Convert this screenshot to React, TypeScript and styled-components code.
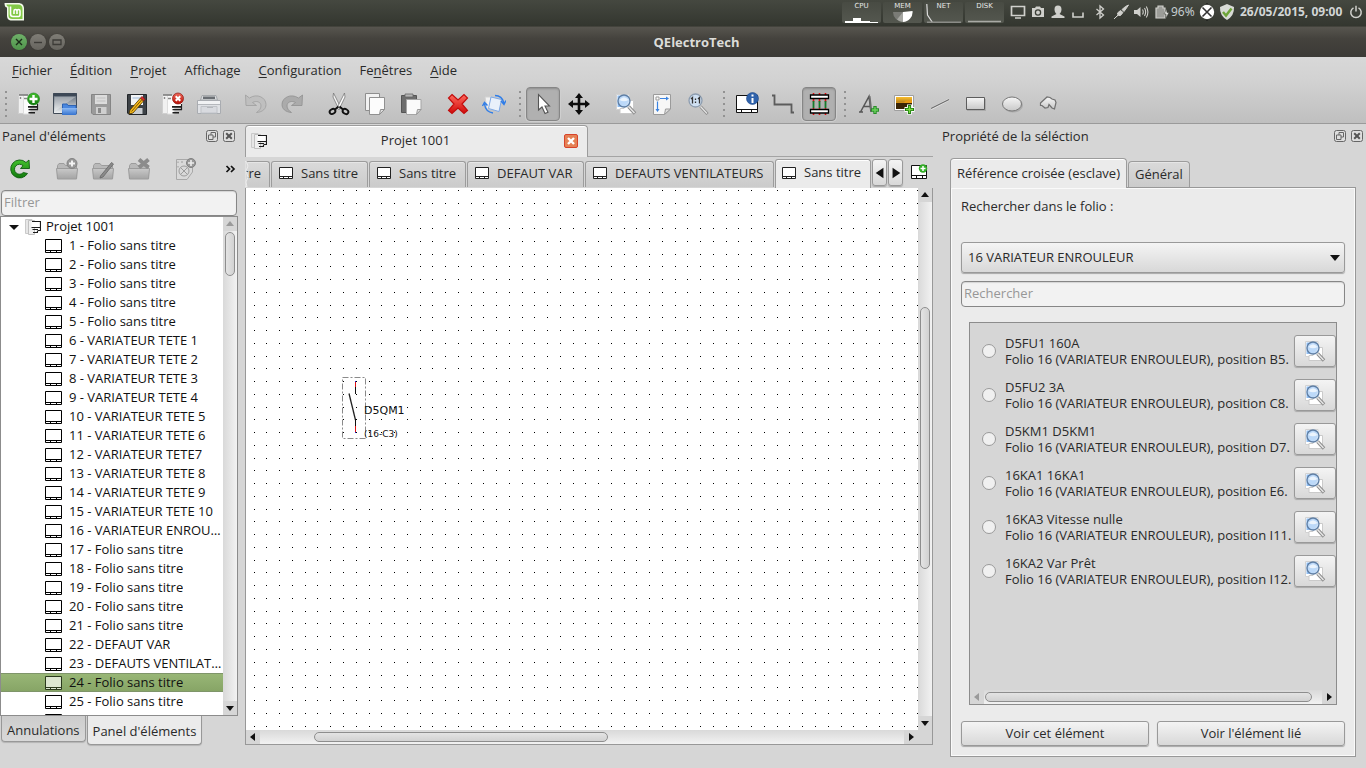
import React from "react";
import styled, { createGlobalStyle, css } from "styled-components";

const FONT = '"Open Sans", "Noto Sans", sans-serif';
const BG = "#d6d6d6";
const LIGHT = "#ebebeb";
const LINE = "#8c8c8c";

const GlobalStyle = createGlobalStyle`
  * { box-sizing: border-box; }
  html, body { margin: 0; padding: 0; }
  body {
    background: ${BG};
    color: #2a2a2a;
    font-family: ${FONT};
    font-size: 13px;
    line-height: 16px;
  }
  button, input, select { font: inherit; color: inherit; }
  button { margin: 0; padding: 0; border: 0; background: none; }
  svg { display: block; flex: none; }
  ul { margin: 0; padding: 0; list-style: none; }
`;

const Desktop = styled.div`
  display: flex;
  flex-direction: column;
  height: 100vh;
  overflow: hidden;
`;

/* ---------- desktop panel ---------- */

const DesktopPanel = styled.header`
  display: flex;
  align-items: center;
  height: 26px;
  flex: none;
  padding: 0 0 2px 4px;
  color: #d0d0cc;
  font-family: "Noto Sans", sans-serif;
  font-size: 12px;
  background: linear-gradient(#454840, #33362f);
`;
const Spacer = styled.div`flex: 1;`;
const Monitors = styled.div`
  display: flex;
  gap: 2px;
  margin-right: 4px;
`;
const Monitor = styled.div`
  display: flex;
  flex-direction: column;
  align-items: center;
  justify-content: space-between;
  width: 39px;
  height: 21px;
  border-radius: 2px;
  background: linear-gradient(#484b43, #54574f);
  color: #e6e6e6;
  font: 7px/8px "DejaVu Sans", sans-serif;
`;
const Tray = styled.div`
  display: flex;
  align-items: center;
`;
const TrayGroup = styled.div`
  display: flex;
  margin-right: 3px;
`;
const TrayButton = styled.button`
  display: flex;
  align-items: center;
  justify-content: center;
  width: 20px;
  height: 22px;
`;
const Battery = styled.span`
  width: 26px;
  color: #c4cccf;
  white-space: nowrap;
`;
const Clock = styled.time`
  width: 106px;
  margin-left: 3px;
  font-weight: 700;
  color: #d2d6d6;
  white-space: nowrap;
`;

/* ---------- window frame ---------- */

const TitleBar = styled.div`
  display: grid;
  grid-template-columns: 1fr auto 1fr;
  align-items: center;
  height: 31px;
  flex: none;
  padding: 0 0 0 11px;
  background: linear-gradient(#57554f, #44423d 40%, #3b3a36);
  border-top: 1px solid #43433c;
  h1 { margin: 0 0 0 16px; font-size: 13px; line-height: 18px; font-weight: 700; color: #dcdcd8; }
`;
const WindowButtons = styled.div`
  display: flex;
  align-items: center;
  gap: 3px;
`;
const WindowButton = styled.button<{ $green?: boolean }>`
  display: flex;
  align-items: center;
  justify-content: center;
  width: 16px;
  height: 16px;
  border-radius: 50%;
  box-shadow: 0 0 1px #2a2926;
  background: ${(p) => (p.$green ? "linear-gradient(#6fb069, #4f944b)" : "linear-gradient(#7f7d76, #66645e)")};
`;

const Chrome = styled.div`
  flex: none;
  background: linear-gradient(#d8d8d8, #d2d2d2 35%, #bfbfbf);
  border-bottom: 1px solid #9a9a9a;
`;
const MenuBar = styled.nav`
  display: flex;
  align-items: center;
  gap: 18px;
  height: 28px;
  padding: 0 12px 2px;
`;
const MenuItem = styled.button`
  white-space: nowrap;
  u { text-underline-offset: 2px; text-decoration-thickness: 1px; }
`;
const ToolBar = styled.div`
  display: flex;
  align-items: center;
  height: 38px;
`;
const Grip = styled.div<{ $first?: boolean }>`
  width: ${(p) => (p.$first ? 11 : 13)}px;
  height: 26px;
  background: repeating-linear-gradient(#929292 0 2px, transparent 2px 6px) ${(p) => (p.$first ? "5px" : "7px")} 0 / 2px 26px no-repeat;
`;
const Gap = styled.div`width: 11px;`;
const Tool = styled.button<{ $on?: boolean }>`
  display: flex;
  align-items: center;
  justify-content: center;
  width: 34px;
  height: 34px;
  margin: 0 1px;
  border: 1px solid transparent;
  border-radius: 4px;
  flex: none;
  ${(p) =>
    p.$on &&
    css`
      background: #b0b0b0;
      border-color: #868686;
      box-shadow: inset 0 1px 2px #8f8f8f, 0 0 0 1px #cfcfcf;
    `}
`;

/* ---------- body ---------- */

const Body = styled.div`
  display: flex;
  flex: 1;
  min-height: 0;
`;
const Dock = styled.aside<{ $w: number }>`
  display: flex;
  flex-direction: column;
  flex: none;
  width: ${(p) => p.$w}px;
  min-height: 0;
`;
const DockTitle = styled.div`
  display: flex;
  align-items: center;
  gap: 5px;
  height: 24px;
  flex: none;
  padding: 0 3px 0 2px;
  h2 { flex: 1; margin: 0; font-size: 13px; line-height: 16px; font-weight: 400; }
`;
const DockTools = styled.div`
  display: flex;
  align-items: center;
  height: 42px;
  flex: none;
  padding: 0 1px 0 2px;
  span { flex: 1; }
`;

const fieldBox = css`
  height: 26px;
  border: 1px solid #868686;
  border-radius: 4px;
  background: #f2f2f2;
  box-shadow: inset 0 1px 1px #d4d4d4;
  flex: none;
  outline: none;
  &::placeholder { color: #979797; opacity: 1; }
`;
const Filter = styled.input`
  ${fieldBox}
  margin: 0 1px;
  padding: 0 2px 2px;
`;

const TreeBox = styled.div`
  display: flex;
  flex: 1;
  min-height: 0;
  border: 1px solid ${LINE};
  background: #fff;
  color: #111;
`;
const Tree = styled.ul`
  flex: 1;
  min-width: 0;
  overflow: hidden;
`;
const TreeRow = styled.li<{ $root?: boolean; $selected?: boolean }>`
  display: flex;
  align-items: center;
  gap: ${(p) => (p.$root ? 5 : 6)}px;
  height: 19px;
  padding-left: ${(p) => (p.$root ? 7 : 43)}px;
  span { padding-bottom: 2px; overflow: hidden; text-overflow: ellipsis; white-space: nowrap; }
  ${(p) =>
    p.$selected &&
    css`
      background: linear-gradient(#98b676, #87a566);
      border-top: 1px solid #7f956a;
      border-bottom: 1px solid #7f956a;
    `}
`;

const BottomTabs = styled.div`
  display: flex;
  align-items: flex-start;
  gap: 1px;
  height: 52px;
  flex: none;
  padding-left: 1px;
`;
const BottomTab = styled.button<{ $active?: boolean }>`
  height: ${(p) => (p.$active ? 29 : 26)}px;
  padding: ${(p) => (p.$active ? 2 : 3)}px 5px 0;
  border: 1px solid #989898;
  border-top: 0;
  border-radius: 0 0 4px 4px;
  background: ${(p) => (p.$active ? LIGHT : "linear-gradient(#cccccc, #d9d9d9)")};
  box-shadow: 0 1px 1px #b4b4b4;
  white-space: nowrap;
`;

/* ---------- scroll bars ---------- */

const Bar = styled.div<{ $v?: boolean }>`
  display: flex;
  flex-direction: ${(p) => (p.$v ? "column" : "row")};
  flex: none;
  background: ${BG};
  ${(p) => (p.$v ? "width: 14px;" : "height: 14px;")}
`;
const BarArrow = styled.button`
  display: flex;
  align-items: center;
  justify-content: center;
  width: 14px;
  height: 14px;
  flex: none;
`;
const Track = styled.div<{ $v?: boolean }>`
  display: flex;
  flex-direction: ${(p) => (p.$v ? "column" : "row")};
  flex: 1;
  min-height: 0;
  min-width: 0;
  padding: ${(p) => (p.$v ? "0 2px" : "2px 0")};
  background: linear-gradient(${(p) => (p.$v ? "90deg" : "180deg")}, #d9d9d9, #f2f2f2);
`;
const Before = styled.div<{ $n: number }>`flex: ${(p) => p.$n} 0 0;`;
const Thumb = styled.div<{ $n: number; $v?: boolean }>`
  flex: ${(p) => p.$n} 0 0;
  border: 1px solid #8e8e8e;
  border-radius: 5px;
  background: linear-gradient(${(p) => (p.$v ? "90deg" : "180deg")}, #e4e4e4, #d2d2d2);
`;

const ARROWS = {
  up: "M3 9L7 4L11 9Z",
  down: "M3 5L7 10L11 5Z",
  left: "M9 3L4 7L9 11Z",
  right: "M5 3L10 7L5 11Z",
};
const TAB_ARROWS = { left: "M12 2L3 8L12 14Z", right: "M4 2L13 8L4 14Z" };

function Arrow({ dir, dim }: { dir: keyof typeof ARROWS; dim?: boolean }) {
  return (
    <svg width="14" height="14" viewBox="0 0 14 14">
      <path d={ARROWS[dir]} fill={dim ? "#9a9a9a" : "#111"} />
    </svg>
  );
}
function ScrollBar({ v, parts, dimStart }: { v?: boolean; parts: [number, number, number]; dimStart?: boolean }) {
  return (
    <Bar $v={v}>
      <BarArrow aria-label={v ? "Haut" : "Gauche"}><Arrow dir={v ? "up" : "left"} dim={dimStart} /></BarArrow>
      <Track $v={v}>
        <Before $n={parts[0]} />
        <Thumb $n={parts[1]} $v={v} />
        <Before $n={parts[2]} />
      </Track>
      <BarArrow aria-label={v ? "Bas" : "Droite"}><Arrow dir={v ? "down" : "right"} /></BarArrow>
    </Bar>
  );
}

/* ---------- centre ---------- */

const Workspace = styled.main`
  display: flex;
  flex-direction: column;
  flex: 1;
  min-width: 0;
  margin: 0 7px 23px;
`;
const ProjectTabs = styled.div`
  display: flex;
  flex: none;
  height: 33px;
  padding-top: 1px;
  border-bottom: 1px solid #a4a4a4;
`;
const ProjectTab = styled.div`
  display: flex;
  align-items: center;
  width: 343px;
  height: 32px;
  padding: 0 9px 2px 5px;
  background: ${LIGHT};
  border: 1px solid #9c9c9c;
  border-bottom: 0;
  border-radius: 4px 4px 0 0;
  box-shadow: inset 0 1px 0 #fff;
  span { flex: 1; padding-bottom: 2px; text-align: center; }
`;
const FolioBar = styled.div`
  display: flex;
  align-items: flex-end;
  flex: none;
  height: 31px;
  position: relative;
`;
const FolioTabs = styled.div`
  display: flex;
  align-items: flex-end;
  gap: 1px;
  flex: none;
`;
const FolioTab = styled.button<{ $w: number; $active?: boolean; $cut?: boolean }>`
  display: flex;
  align-items: center;
  justify-content: ${(p) => (p.$cut ? "flex-end" : "flex-start")};
  gap: 7px;
  width: ${(p) => p.$w}px;
  height: ${(p) => (p.$active ? 29 : 26)}px;
  margin-bottom: ${(p) => (p.$active ? 0 : 1)}px;
  padding: 0 8px 2px ${(p) => (p.$active ? 5 : 6)}px;
  overflow: hidden;
  white-space: nowrap;
  border: 1px solid #9c9c9c;
  border-bottom: 0;
  border-radius: 3px 3px 0 0;
  box-shadow: inset 0 1px 0 ${(p) => (p.$active ? "#fff" : "#e6e6e6")};
  background: ${(p) => (p.$active ? LIGHT : "linear-gradient(#dadada, #cbcbcb)")};
  span { padding-bottom: 2px; }
`;
const raised = css`
  border: 1px solid #999;
  border-radius: 3px;
  background: linear-gradient(#f4f4f4, #d8d8d8);
  box-shadow: 0 1px 1px #a8a8a8;
`;
const TabArrow = styled.button`
  ${raised}
  display: flex;
  align-items: center;
  justify-content: center;
  width: 15px;
  height: 27px;
  margin: 0 0 2px 1px;
`;
const AddFolio = styled.button`
  margin: 0 0 8px 7px;
`;
const TornEdge = styled.svg`
  position: absolute;
  left: 0;
  top: 4px;
`;
const Editor = styled.section`
  display: flex;
  flex-direction: column;
  flex: 1;
  min-height: 0;
  border: 1px solid #989898;
  border-top: 0;
`;
const EditorRow = styled.div`
  display: flex;
  flex: 1;
  min-height: 0;
`;
const Canvas = styled.div`
  flex: 1;
  min-width: 0;
  overflow: hidden;
  background: #fff;
`;
const BottomScroll = styled.div`
  padding-right: 14px;
  background: ${BG};
`;

/* ---------- properties dock ---------- */

const PropTabs = styled.div`
  display: flex;
  align-items: flex-end;
  gap: 1px;
  height: 30px;
  margin: 10px 8px 0 10px;
  position: relative;
  z-index: 1;
`;
const PropTab = styled.button<{ $active?: boolean }>`
  height: ${(p) => (p.$active ? 30 : 26)}px;
  margin-bottom: ${(p) => (p.$active ? 0 : 1)}px;
  padding: 0 6px 1px;
  border: 1px solid #9c9c9c;
  border-bottom: 0;
  border-radius: 4px 4px 0 0;
  background: ${(p) => (p.$active ? LIGHT : "linear-gradient(#dadada, #cbcbcb)")};
  box-shadow: inset 0 1px 0 ${(p) => (p.$active ? "#fff" : "#e6e6e6")};
  white-space: nowrap;
`;
const PropPanel = styled.section`
  display: flex;
  flex-direction: column;
  flex: 1;
  min-height: 0;
  margin: -1px 10px 11px;
  padding: 10px;
  border: 1px solid #989898;
  background: ${LIGHT};
  box-shadow: inset 0 0 0 1px #fafafa;
`;
const FieldLabel = styled.label`
  height: 44px;
`;
const SelectWrap = styled.div`
  ${raised}
  display: flex;
  align-items: center;
  height: 31px;
  flex: none;
  padding-right: 3px;
  select {
    flex: 1;
    height: 29px;
    padding: 0 6px 2px;
    border: 0;
    background: transparent;
    appearance: none;
    outline: none;
  }
`;
const Search = styled.input`
  ${fieldBox}
  margin-top: 8px;
  padding: 0 2px 2px;
`;
const Results = styled.div`
  display: flex;
  flex-direction: column;
  flex: 1;
  min-height: 0;
  margin: 15px 8px 16px;
  border: 1px solid ${LINE};
  background: ${BG};
`;
const ResultList = styled.ul`
  flex: 1;
  min-height: 0;
  overflow: hidden;
  padding-top: 6px;
`;
const Result = styled.li`
  display: flex;
  align-items: center;
  height: 44px;
  padding-left: 12px;
`;
const Radio = styled.input`
  appearance: none;
  width: 14px;
  height: 14px;
  margin: 0 9px 0 0;
  border: 1px solid #9a9a9a;
  border-radius: 50%;
  background: #f0f0f0;
  flex: none;
`;
const ResultLabel = styled.label`
  flex: 1;
  white-space: nowrap;
`;
const LookButton = styled.button`
  ${raised}
  display: flex;
  align-items: center;
  justify-content: center;
  width: 42px;
  height: 32px;
  flex: none;
`;
const Actions = styled.div`
  display: grid;
  grid-template-columns: 1fr 1fr;
  gap: 8px;
`;
const PushButton = styled.button`
  ${raised}
  height: 25px;
  padding-bottom: 2px;
`;

/* ---------- icons ---------- */

const Svg24 = ({ children }: { children: React.ReactNode }) => (
  <svg width="24" height="24" viewBox="0 0 24 24" fill="none">{children}</svg>
);

function Gradients() {
  const g = (id: string, a: string, b: string) => (
    <linearGradient id={id} x1="0" y1="0" x2="0" y2="1">
      <stop offset="0" stopColor={a} />
      <stop offset="1" stopColor={b} />
    </linearGradient>
  );
  return (
    <svg width="24" height="24" viewBox="0 0 24 24">
      <defs>
        {g("gBlue", "#8db9f3", "#3573cf")}
        {g("gGreen", "#42c12c", "#127a0d")}
        {g("gRed", "#ee6a5c", "#b80f06")}
        {g("gWin", "#5a6572", "#eef1f3")}
        {g("gGrey", "#c9c9c9", "#a4a4a4")}
        {g("gShape", "#f6f6f6", "#c8c8c8")}
        {g("gSun", "#fbbf2d", "#6c3a05")}
        {g("gX", "#ff6a5e", "#d00808")}
      </defs>
    </svg>
  );
}

const GreenPlus = ({ x, y, r = 6 }: { x: number; y: number; r?: number }) => (
  <g>
    <circle cx={x} cy={y} r={r} fill="url(#gGreen)" stroke="#0f7a10" strokeWidth="0.6" />
    <path d={`M${x - r + 2} ${y}H${x + r - 2}M${x} ${y - r + 2}V${y + r - 2}`} stroke="#fff" strokeWidth="2.400" />
  </g>
);
const ProjectBody = () => (
  <g>
    <path d="M1.500 2.500H8V21.500H1.500Z" fill="#f1f1f1" stroke="#cfcfcf" />
    <path d="M6.500 3.500H13V22H6.500Z" fill="#fbfbfb" stroke="#dedede" />
    <path d="M2 3H11" stroke="#777" strokeWidth="1.500" />
    <path d="M3.500 5V7M7 6.500H10" stroke="#888" strokeWidth="1.400" />
    <path d="M10 8H21V14H10Z" fill="#fff" />
    <path d="M11 14H21V15.700H11ZM11.500 17H21V18.300H11.500ZM11.500 20H18V21.500H11.500Z" fill="#1c1c1c" />
    <path d="M20.500 12V18" stroke="#222" strokeWidth="1.200" />
  </g>
);
const Magnifier = () => (
  <g>
    <path d="M14.500 14.500L21 21.500" stroke="#8e8e8e" strokeWidth="3.400" />
    <path d="M14.500 14.500L20.500 21" stroke="#e8e8e8" strokeWidth="1.400" />
    <circle cx="10" cy="9" r="6" fill="#c4defa" fillOpacity=".85" stroke="#5f7ea3" strokeWidth="1.300" />
    <path d="M5.500 8Q10 2.500 14.500 8Q10 10.500 5.500 8Z" fill="#fff" fillOpacity=".7" />
  </g>
);
const FolderGrey = () => (
  <g>
    <path d="M2.500 21V8.500L4 6.500H9L10.500 8.500H21.500V21Z" fill="#b9b9b9" stroke="#9d9d9d" />
    <path d="M1.500 11.500H22.500L21.500 22H2.500Z" fill="url(#gGrey)" stroke="#9c9c9c" />
  </g>
);

const ICONS: Record<string, React.ReactNode> = {
  newProject: <><ProjectBody /><GreenPlus x={16.5} y={7} /></>,
  open: (
    <>
      <path d="M.5 1.500H23.500V21.500H.5Z" fill="url(#gWin)" stroke="#414b57" />
      <path d="M.5 1H23.500V4H.5Z" fill="#3d4856" />
      <path d="M1.500 5H22.500L2 19Z" fill="#fff" fillOpacity=".3" />
      <path d="M9.500 13V12H14L15 13.500H23V22.500H9.500Z" fill="#4a87df" stroke="#2c63b4" />
      <path d="M9 16H24L23 23H9.500Z" fill="url(#gBlue)" />
    </>
  ),
  save: (
    <>
      <path d="M2.500 2.500H21.500V22.500H4L2.500 21Z" fill="#9b9b9b" stroke="#858585" />
      <path d="M6 3H18V12H6Z" fill="#dcdcdc" />
      <path d="M7.500 6H16.500M7.500 9H16.500" stroke="#c0c0c0" />
      <path d="M7 15H17.500V22H7Z" fill="#cfcfcf" />
      <path d="M9 16H12V21H9Z" fill="#8a8a8a" />
    </>
  ),
  saveAs: (
    <>
      <path d="M2.500 2.500H21.500V22.500H4L2.500 21Z" fill="#3d4247" stroke="#22262a" />
      <path d="M6 3H18V13H6Z" fill="#f2f4f6" />
      <path d="M7.500 6H16.500" stroke="#9cb7d8" />
      <path d="M7 16H17.500V22H7Z" fill="#c9cdd1" />
      <path d="M5 18L15.500 6L18.500 9L8 21L4 22Z" fill="#f5b91c" stroke="#4a3505" strokeWidth=".8" />
      <path d="M15.500 6L17 4.300L20 7.300L18.500 9Z" fill="#d92a2a" stroke="#701010" strokeWidth=".5" />
      <path d="M6.500 19.500L17 7.500" stroke="#6d4b05" strokeWidth=".9" />
    </>
  ),
  closeProject: (
    <>
      <ProjectBody />
      <circle cx="17" cy="6.500" r="5.500" fill="url(#gRed)" stroke="#8f130d" strokeWidth=".7" />
      <path d="M14.700 4.200L19.300 8.800M19.300 4.200L14.700 8.800" stroke="#fff" strokeWidth="2" />
    </>
  ),
  print: (
    <>
      <path d="M5 3.500H19L20.500 8H3.500Z" fill="#d9dbde" stroke="#a5a8ab" />
      <path d="M6 4.500H18V7H6Z" fill="#6a6e73" />
      <path d="M.5 8.500H23.500V21.500H.5Z" fill="#dfe1e5" stroke="#a9acb1" />
      <path d="M1 9H23V12H1Z" fill="#f1f2f4" />
      <path d="M4 14.500H20V21H4Z" fill="#d8dadf" stroke="#c0c3c8" />
      <path d="M10 15.500H16M1 12.500H23" stroke="#b4b7bc" />
    </>
  ),
  undo: <path d="M1.500 3L2 13.500H12.500L8.500 10.500C12 8.500 17 9.500 17 14C17 16.500 15 19 12.500 20.500C19 20 22 16.500 22 12.500C22 5.500 13 1 5.500 6Z" fill="#bfbfbf" stroke="#9e9e9e" strokeWidth=".8" />,
  redo: <path d="M22.500 3L22 13.500H11.500L15.500 10.500C12 8.500 7 9.500 7 14C7 16.500 9 19 11.500 20.500C5 20 2 16.500 2 12.500C2 5.500 11 1 18.500 6Z" fill="#ababab" stroke="#8f8f8f" strokeWidth=".8" />,
  cut: (
    <>
      <path d="M6.500 1L14 16L12 17.500L6 5Z" fill="#f4f4f4" stroke="#777" strokeWidth=".8" />
      <path d="M17.500 1L10 16L12 17.500L18 5Z" fill="#fff" stroke="#777" strokeWidth=".8" />
      <ellipse cx="5.500" cy="19.500" rx="3" ry="2.300" stroke="#111" strokeWidth="1.900" transform="rotate(-30 5.500 19.500)" />
      <ellipse cx="18.500" cy="19.500" rx="3" ry="2.300" stroke="#111" strokeWidth="1.900" transform="rotate(30 18.500 19.500)" />
      <path d="M8 17.500L11.500 14.500M16 17.500L12.500 14.500" stroke="#111" strokeWidth="1.900" />
    </>
  ),
  copy: (
    <>
      <path d="M2.500 1.500H16.500V18.500H2.500Z" fill="#f2f2f2" stroke="#8e8e8e" />
      <path d="M6.500 5.500H21.500V17.500L16.500 22.500H6.500Z" fill="#fcfcfc" stroke="#909090" />
      <path d="M21.500 17.500H17.500L16.500 22.500Z" fill="#ddd" stroke="#909090" />
    </>
  ),
  paste: (
    <>
      <path d="M2.500 3.500H17.500V20.500H2.500Z" fill="#6d6d6d" stroke="#555" />
      <path d="M6 2H14V5H6Z" fill="#b5b5b5" stroke="#666" strokeWidth=".8" />
      <path d="M7.500 7.500H22V17.500L17.500 22.500H7.500Z" fill="#fafafa" stroke="#a5a5a5" />
      <path d="M22 17.500H18.500L17.500 22.500Z" fill="#ddd" stroke="#999" />
    </>
  ),
  remove: <path d="M6 2.500L12 8L18 2.500L21.500 6L16 12L21.500 18.500L18 21.500L12 16L6 21.500L2.500 18.500L8 12L2.500 6Z" fill="url(#gX)" stroke="#c20d0d" strokeWidth="1.200" />,
  rotate: (
    <>
      <path d="M3 5H9V17H5Z" fill="#f2f2f2" stroke="#d2d2d2" />
      <path d="M9 5L19.500 7.500L17 19.500L6.500 16.500Z" fill="#e9f0fa" stroke="#7ea8e4" />
      <path d="M13 3.500Q20 3.500 22 11M19 9L22 12.500L24 8.500M11 21Q3.500 20 2.500 12M.5 14L2.500 10.500L5.500 13.500" stroke="#2f7de8" strokeWidth="1.400" />
    </>
  ),
  pointer: <path d="M7.500 2.500V18L11 15L14 21.500L17 20.300L14 14H18.500Z" fill="#fff" stroke="#555" strokeWidth="1.100" />,
  move: <path d="M12 1L16 6H13.300V10.700H18V8L23 12L18 16V13.300H13.300V18H16L12 23L8 18H10.700V13.300H6V16L1 12L6 8V10.700H10.700V6H8Z" fill="#0c0c0c" />,
  zoomFit: (
    <>
      <path d="M2.500 2.500H15V17.500H2.500Z" fill="#fff" stroke="#d2d2d2" />
      <path d="M3.500 3.500H14V15H3.500Z" fill="#8ebcf0" />
      <path d="M15 8.500H19.500V21.500H6V16.500H10Z" fill="#fff" stroke="#cacaca" />
      <Magnifier />
    </>
  ),
  zoomPage: (
    <>
      <path d="M3.500 2.500H20.500V17L14.500 22.500H3.500Z" fill="#f7f7f7" stroke="#9b9b9b" />
      <path d="M20.500 17H15.500L14.500 22.500Z" fill="#ddd" stroke="#9b9b9b" />
      <path d="M6 5H9V8H6Z" fill="#fff" stroke="#999" />
      <path d="M10 6.500H17M7.500 9.500V19" stroke="#3b83e0" strokeWidth="1.200" />
      <path d="M16 4.500L19 6.500L16 8.500ZM5.500 17L7.500 20L9.500 17Z" fill="#3b83e0" />
    </>
  ),
  zoomReset: (
    <>
      <path d="M14.500 14.500L21.500 22" stroke="#8a8a8a" strokeWidth="3" />
      <path d="M14.500 14.500L21 21.500" stroke="#e4e4e4" strokeWidth="1.300" />
      <circle cx="9.500" cy="8.500" r="6.500" fill="#cfe0f2" stroke="#8d9db0" strokeWidth="1.300" />
      <path d="M5 7L6.500 5.500V11.500M12 7L13.500 5.500V11.500" stroke="#333" strokeWidth="1.300" />
      <path d="M9.500 6.500V8M9.500 9.500V11" stroke="#333" strokeWidth="1.300" />
    </>
  ),
  folioInfo: (
    <>
      <path d="M1.500 3.500H22.500V20.500H1.500Z" fill="#fff" stroke="#111" />
      <path d="M1 17.500H23M6.500 17V21M16.500 17V21" stroke="#111" />
      <circle cx="17.500" cy="6.500" r="6" fill="#2f62ab" stroke="#1f4a8c" strokeWidth=".6" />
      <path d="M17.500 6V11M17.500 2.500V4.500" stroke="#fff" strokeWidth="2" />
    </>
  ),
  conductor: <path d="M1 3.500H3.500V12.500H20.500V20.500H23" stroke="#5c5c5c" strokeWidth="1.800" />,
  autoConductor: (
    <>
      <path d="M6.500 1V23M12.500 1V23M18.500 1V23" stroke="#e01212" strokeWidth="1.600" strokeDasharray="9 6 9" />
      <path d="M6.500 9V16M12.500 9V16M18.500 9V16" stroke="#157a2c" strokeWidth="1.800" />
      <path d="M3.500 3H21.500V6.500H3.500ZM3.500 17.500H21.500V21H3.500Z" fill="#fff" stroke="#000" strokeWidth="1.300" />
    </>
  ),
  text: (
    <>
      <path d="M3 20H7M4.500 20L13 4.500L15 20M8 14.500H14" stroke="#565656" strokeWidth="1.500" />
      <path d="M13 4.500L14.500 4L16 17L14 18Z" fill="#6d6d6d" />
      <path d="M19 14V22M15 18H23" stroke="#2a8d2a" strokeWidth="3.400" />
      <path d="M19 15V21M16 18H22" stroke="#6bd35c" strokeWidth="1.400" />
    </>
  ),
  image: (
    <>
      <path d="M2.500 3.500H21.500V18.500H2.500Z" fill="#fff" stroke="#9f9f9f" />
      <path d="M4 5H20V17H4Z" fill="url(#gSun)" />
      <path d="M4 11H20V17H4Z" fill="#3a2506" />
      <path d="M4 10.500H12L14 8.500H20V11H4Z" fill="#e79a14" />
      <path d="M17.500 12.500V22.500M12.500 17.500H22.500" stroke="#fff" strokeWidth="5" />
      <path d="M17.500 13V22M13 17.500H22" stroke="#217c12" strokeWidth="3.200" />
      <path d="M17.500 14V21M14 17.500H21" stroke="#77dc3f" strokeWidth="1.300" />
    </>
  ),
  line: (
    <>
      <path d="M3 17L21 7.500" stroke="#e4e4e4" strokeWidth="2.400" />
      <path d="M3 16.500L21 7.500" stroke="#6a6a6a" strokeWidth="1.200" />
    </>
  ),
  rect: (
    <>
      <path d="M3 7H22V19H3Z" fill="#999" fillOpacity=".6" />
      <path d="M2.500 5.500H20.500V17.500H2.500Z" fill="url(#gShape)" stroke="#5d5d5d" />
    </>
  ),
  ellipse: (
    <>
      <ellipse cx="13" cy="13" rx="10" ry="7.500" fill="#999" fillOpacity=".6" />
      <ellipse cx="12" cy="12" rx="9.500" ry="7" fill="url(#gShape)" stroke="#777" />
    </>
  ),
  polygon: <path d="M4.500 11L11 5L14 5.500L16 7L19 8L20 10.500L18.500 17L16 16L13 12.500L12 15.500L9 16L6 13.500H4.500Z" fill="url(#gShape)" stroke="#707070" strokeWidth="1.200" />,
  refresh: <path d="M19.500 16.500A9 9 0 1 1 18 5.500L21 3L21.500 11.500H12.500L15 8.700A5 5 0 1 0 15.300 15.500Z" fill="url(#gGreen)" stroke="#0d5d0d" strokeWidth=".9" />,
  folderNew: (
    <>
      <FolderGrey />
      <circle cx="17" cy="6.500" r="5" fill="#999" stroke="#838383" />
      <path d="M17 3.500V9.500M14 6.500H20" stroke="#f4f4f4" strokeWidth="1.900" />
    </>
  ),
  folderEdit: (
    <>
      <FolderGrey />
      <path d="M9.500 19L20.500 5.500L22.500 7L12 20L9 21Z" fill="#8a8a8a" stroke="#666" strokeWidth=".8" />
    </>
  ),
  folderDelete: (
    <>
      <FolderGrey />
      <path d="M12 2.500L21.500 10.500M21.500 2.500L12 10.500" stroke="#8b8b8b" strokeWidth="4" />
    </>
  ),
  elementNew: (
    <>
      <path d="M2.500 2.500H18.500V15L13 22.500H2.500Z" fill="#d9d9d9" stroke="#a8a8a8" />
      <circle cx="10" cy="14" r="5" stroke="#9c9c9c" />
      <path d="M6.500 10.500L13.500 17.500M13.500 10.500L6.500 17.500M4 4.500V6M4 9V10.500M7 5H9" stroke="#9c9c9c" />
      <circle cx="17" cy="6" r="4.500" fill="#999" stroke="#808080" />
      <path d="M17 3V9M14 6H20" stroke="#ececec" strokeWidth="1.600" />
    </>
  ),
};
const Icon = ({ name }: { name: string }) => <Svg24>{ICONS[name]}</Svg24>;

const FolioIcon = ({ faded, small }: { faded?: boolean; small?: boolean }) => (
  <svg width={small ? 16 : 19} height={small ? 15 : 16} viewBox={small ? "0 0 16 15" : "0 0 19 16"} fill="none">
    {small ? (
      <>
        <path d="M1.500 1.500H14.500V12.500H1.500Z" fill="#fff" stroke="#222" />
        <path d="M1 10.500H15M5.500 10V13M10.500 10V13" stroke="#222" />
      </>
    ) : (
      <>
        <path d="M1.500 1.500H17.500V14.500H1.500Z" fill={faded ? "#dde7d1" : "#fff"} stroke={faded ? "#2b3a1d" : "#000"} />
        <path d="M1 12.500H18M6.500 12V15M12.500 12V15" stroke={faded ? "#2b3a1d" : "#000"} />
      </>
    )}
  </svg>
);
const ProjectIcon = () => (
  <svg width="16" height="16" viewBox="0 0 16 16" fill="none">
    <path d="M.5.500H7V14.500H.5Z" fill="#e6e6e6" stroke="#cacaca" />
    <path d="M3.500 1.500H9.500V15.500H3.500Z" fill="#efefef" stroke="#c0c0c0" />
    <path d="M6.500 2.500H15.500V9H6.500Z" fill="#fff" />
    <path d="M7 2.500H15.500V11.500H13M6.500 8.500H15.500M7.500 10.500H13M8 13.500H13M12.500 11.500V13" stroke="#1c1c1c" strokeWidth="1.200" />
  </svg>
);
const DockButton = ({ close, label }: { close?: boolean; label: string }) => (
  <button aria-label={label}>
    <svg width="12" height="12" viewBox="0 0 12 12" fill="none">
      <rect x=".5" y=".5" width="11" height="11" rx="2" fill="#dedede" stroke="#666" />
      {close ? (
        <path d="M3.200 3.200L8.800 8.800M8.800 3.200L3.200 8.800" stroke="#555" strokeWidth="2" />
      ) : (
        <path d="M5 5V2.500H9.500V7H7M2.500 5H7V9.500H2.500Z" stroke="#666" />
      )}
    </svg>
  </button>
);

const MintLogo = () => (
  <svg width="21" height="20" viewBox="0 0 21 20" fill="none">
    <path d="M.5 1H14C18 1 20 3 20 7V18.500H8C4.500 18.500 3 16.500 3 13.500V5.500C1.500 5.500.5 4 .5 1Z" fill="#f4faec" />
    <path d="M2.500 2.500H14C17 2.500 18.500 4 18.500 7V17H8.500C5.500 17 4.500 15.500 4.500 13.500V4.500C3.500 4.500 2.500 4 2.500 2.500Z" fill="#83c947" />
    <path d="M6.500 4.500V12Q6.500 14.500 9 14.500H14.500Q16 14.500 16 12.500V9Q16 7.500 14.500 7.500T13 9V12M13 9Q13 7.500 11.500 7.500T10 9V12" stroke="#fff" strokeWidth="1.600" />
  </svg>
);

const TRAY: [string, React.ReactNode][] = [
  ["Écran", <path key="a" d="M1.500 2.500H14.500V11.500H1.500ZM5 14H11" stroke="#d0d0cc" strokeWidth="1.700" />],
  ["Capture", <g key="b"><path d="M2 4H5L6 2.500H10L11 4H14V13H2Z" fill="#d0d0cc" /><circle cx="8" cy="8.500" r="2.600" stroke="#3b3e36" strokeWidth="1.300" /></g>],
  ["Utilisateur", <path key="c" d="M8 1.500C10.500 1.500 11.500 3 11.500 5.500S10 9.500 9.500 10L14.500 12.500V14H1.500V12.500L6.500 10C6 9.500 4.500 8 4.500 5.500S5.500 1.500 8 1.500Z" fill="#d0d0cc" />],
  ["Clavier", <path key="d" d="M3 8.500V13H13V8.500" stroke="#d0d0cc" strokeWidth="1.600" />],
  ["Bluetooth", <path key="e" d="M3.500 5L10.500 11L7 14V2L10.500 5L3.500 11" stroke="#d0d0cc" strokeWidth="1.300" />],
  ["Réseau", <path key="f" d="M1 15L5 11L4.500 9L7.500 6.500L10 8.500L7.500 11.500L5.500 11.500M9 5.500L12.500 2.500L15.500 1L13.500 4L11 7.500Z" fill="#d0d0cc" stroke="#d0d0cc" />],
  ["Volume", <g key="g"><path d="M1 6H4L7.500 3V13L4 10H1Z" fill="#d0d0cc" /><path d="M9.500 5.500Q11 8 9.500 10.500M11.500 4Q13.800 8 11.500 12M13.300 2.500Q16.500 8 13.300 13.500" stroke="#d0d0cc" strokeWidth="1.100" /></g>],
  ["Batterie", <g key="h"><path d="M3 4H5V2H10V4H12V14H3Z" fill="#9c9d98" stroke="#d0d0cc" strokeWidth="1.200" /><path d="M13.500 5L11 10H13V14L16 8.500H14Z" fill="#e0e0dc" stroke="#3b3e36" strokeWidth=".5" /></g>],
];

function TrayItems({ items }: { items: typeof TRAY }) {
  return (
    <>
      {items.map(([label, art]) => (
        <TrayButton key={label} aria-label={label}>
          <svg width="16" height="16" viewBox="0 0 16 16" fill="none">{art}</svg>
        </TrayButton>
      ))}
    </>
  );
}

function DesktopBar() {
  return (
    <DesktopPanel>
      <MintLogo />
      <Spacer />
      <Monitors>
        <Monitor>CPU<svg width="33" height="6" viewBox="0 0 33 6"><path d="M0 4H8V1H16V4H25V5H33V6H0Z" fill="#fff" /></svg></Monitor>
        <Monitor>
          MEM
          <svg width="20" height="12" viewBox="0 0 20 12">
            <path d="M0 1A10 10 0 0 0 10 11L10 1Z" fill="#7a7b76" />
            <path d="M10 1L4 8.500A9.500 9.500 0 0 0 10 11Z" fill="#a4a5a0" />
            <path d="M10 1L19.500 0A10 10 0 0 1 10 11Z" fill="#fff" />
          </svg>
        </Monitor>
        <Monitor>NET<svg width="35" height="12" viewBox="0 0 35 12" overflow="visible"><path d="M.8-7L1.500 4L6.500 11.500" stroke="#ddd" strokeWidth="1.200" fill="none" /><path d="M1 11.300H35" stroke="#8b8c87" strokeWidth="1.500" /></svg></Monitor>
        <Monitor>DISK<svg width="33" height="3" viewBox="0 0 33 3"><path d="M0 1.500H33" stroke="#a9aaa5" strokeWidth="1.600" /></svg></Monitor>
      </Monitors>
      <Tray>
        <TrayGroup><TrayItems items={TRAY.slice(0, 4)} /></TrayGroup>
        <TrayItems items={TRAY.slice(4)} />
        <Battery>96%</Battery>
        <TrayButton aria-label="Réseau déconnecté">
          <svg width="16" height="18" viewBox="0 0 16 18" fill="none"><path d="M8 0V18" stroke="#111" /><circle cx="8" cy="9" r="7.200" fill="#fff" /><path d="M3.500 4.500L12.500 13.500M12.500 4.500L3.500 13.500" stroke="#333" strokeWidth="1.600" /></svg>
        </TrayButton>
        <TrayButton aria-label="Mises à jour">
          <svg width="16" height="18" viewBox="0 0 16 18" fill="none"><path d="M8 1L15 4Q15.500 12.500 8 17Q.5 12.500 1 4Z" fill="#d9dbd6" /><path d="M4 9L7 12.500L12.500 5.500" stroke="#6fa53a" strokeWidth="2.500" /></svg>
        </TrayButton>
        <Clock>26/05/2015, 09:00</Clock>
        <TrayButton aria-label="Éteindre">
          <svg width="14" height="14" viewBox="0 0 14 14" fill="none"><path d="M4.500 2.800A5.200 5.200 0 1 0 9.500 2.800M7 .8V6.500" stroke="#d0d0cc" strokeWidth="1.500" /></svg>
        </TrayButton>
      </Tray>
    </DesktopPanel>
  );
}

const MENUS: [string, string, string][] = [
  ["", "F", "ichier"], ["", "É", "dition"], ["", "P", "rojet"], ["Afficha", "g", "e"],
  ["", "C", "onfiguration"], ["Fe", "n", "êtres"], ["", "A", "ide"],
];

const TOOLS: string[] = [
  "newProject", "open", "save", "saveAs", "closeProject", "print", "-", "undo", "redo", "-", "cut", "copy", "paste", "-",
  "remove", "rotate", "|", "pointer", "move", "-", "zoomFit", "zoomPage", "zoomReset", "|", "folioInfo", "conductor",
  "autoConductor", "|", "text", "image", "line", "rect", "ellipse", "polygon",
];
const PRESSED = ["pointer", "autoConductor"];

const NAMES: Record<number, string> = {
  6: "VARIATEUR TETE 1", 7: "VARIATEUR TETE 2", 8: "VARIATEUR TETE 3", 9: "VARIATEUR TETE 4", 10: "VARIATEUR TETE 5",
  11: "VARIATEUR TETE 6", 12: "VARIATEUR TETE7", 13: "VARIATEUR TETE 8", 14: "VARIATEUR TETE 9", 15: "VARIATEUR TETE 10",
  16: "VARIATEUR ENROULEUR", 22: "DEFAUT VAR", 23: "DEFAUTS VENTILATEURS",
};
const FOLIOS = Array.from({ length: 26 }, (_, i) => `${i + 1} - ${NAMES[i + 1] ?? "Folio sans titre"}`);

const FOLIO_TABS: { text: string; w: number; cut?: boolean; active?: boolean }[] = [
  { text: "Sans titre", w: 25, cut: true },
  { text: "Sans titre", w: 97 },
  { text: "Sans titre", w: 97 },
  { text: "DEFAUT VAR", w: 117 },
  { text: "DEFAUTS VENTILATEURS", w: 189 },
  { text: "Sans titre", w: 96, active: true },
];

const RESULTS = [
  ["D5FU1 160A", "B5"], ["D5FU2 3A", "C8"], ["D5KM1 D5KM1", "D7"],
  ["16KA1 16KA1", "E6"], ["16KA3 Vitesse nulle", "I11"], ["16KA2 Var Prêt", "I12"],
];

/* The drawing grid: one dot every 12.757 units, snapped to whole pixels. */
const STEP = 12.757;
let dots = "";
for (let j = 0; j < 80; j++) {
  for (let i = 0; i < 160; i++) {
    dots += `M${Math.floor(8.2 + i * STEP)} ${Math.floor(2.25 + j * STEP)}h1v1h-1z`;
  }
}

function Diagram() {
  return (
    <svg width="100%" height="100%">
      <path d={dots} fill="#000" shapeRendering="crispEdges" />
      <rect x="96.500" y="189.500" width="23" height="61" fill="none" stroke="#8a8a8a" strokeDasharray="6 2 2 2" />
      <path d="M103 205.500L109.500 232" stroke="#222" strokeWidth="1.300" fill="none" />
      <path d="M109.500 193V206M109.500 231V245" stroke="#111" />
      <path d="M109.500 194V199M109.500 238V244" stroke="#e01212" />
      <path d="M109.500 193V194M109.500 244V245" stroke="#1a1ad0" />
      <text x="118" y="226" fontFamily="DejaVu Sans" fontSize="11" fill="#111">D5QM1</text>
      <text x="118" y="249" fontFamily="DejaVu Sans" fontSize="9" fill="#111">(16-C3)</text>
    </svg>
  );
}

/* Holds the gradients shared by the icons; draws nothing itself. */
const SharedDefs = styled.div`
  position: absolute;
  width: 0;
  height: 0;
  overflow: hidden;
`;

export default function App() {
  return (
    <Desktop>
      <GlobalStyle />
      <SharedDefs aria-hidden="true"><Gradients /></SharedDefs>
      <DesktopBar />
      <TitleBar>
        <WindowButtons>
          <WindowButton $green aria-label="Fermer">
            <svg width="8" height="8" viewBox="0 0 8 8"><path d="M1 1L7 7M7 1L1 7" stroke="#1b2b19" strokeWidth="1.400" /></svg>
          </WindowButton>
          <WindowButton aria-label="Réduire">
            <svg width="8" height="8" viewBox="0 0 8 8"><path d="M0 4.500H8" stroke="#3c3b37" strokeWidth="1.400" /></svg>
          </WindowButton>
          <WindowButton aria-label="Agrandir">
            <svg width="10" height="8" viewBox="0 0 10 8"><path d="M1 2H9V6.500H1Z" fill="none" stroke="#3c3b37" strokeWidth="1.300" /></svg>
          </WindowButton>
        </WindowButtons>
        <h1>QElectroTech</h1>
      </TitleBar>
      <Chrome>
        <MenuBar>
          {MENUS.map(([a, u, b]) => (
            <MenuItem key={a + u + b}>{a}<u>{u}</u>{b}</MenuItem>
          ))}
        </MenuBar>
        <ToolBar>
          <Grip $first />
          {TOOLS.map((t, i) =>
            t === "-" ? <Gap key={i} /> : t === "|" ? <Grip key={i} /> : (
              <Tool key={i} aria-label={t} $on={PRESSED.includes(t)}><Icon name={t} /></Tool>
            )
          )}
        </ToolBar>
      </Chrome>
      <Body>
        <Dock $w={238}>
          <DockTitle>
            <h2>Panel d'éléments</h2>
            <DockButton label="Détacher" />
            <DockButton close label="Fermer le panneau" />
          </DockTitle>
          <DockTools>
            <Tool aria-label="Recharger"><Icon name="refresh" /></Tool>
            <Gap />
            <Tool aria-label="Nouvelle catégorie"><Icon name="folderNew" /></Tool>
            <Tool aria-label="Modifier la catégorie"><Icon name="folderEdit" /></Tool>
            <Tool aria-label="Supprimer la catégorie"><Icon name="folderDelete" /></Tool>
            <Gap />
            <Tool aria-label="Nouvel élément"><Icon name="elementNew" /></Tool>
            <span />
            <button aria-label="Plus d'outils">
              <svg width="12" height="8" viewBox="0 0 12 8" fill="none"><path d="M1.500 1L4.500 4L1.500 7M6 1L9 4L6 7" stroke="#111" strokeWidth="1.700" /></svg>
            </button>
          </DockTools>
          <Filter aria-label="Filtrer" placeholder="Filtrer" />
          <TreeBox>
            <Tree>
              <TreeRow $root>
                <svg width="12" height="8" viewBox="0 0 12 8"><path d="M1 2H11L6 7Z" fill="#111" /></svg>
                <ProjectIcon />
                <span>Projet 1001</span>
              </TreeRow>
              {FOLIOS.map((f, i) => (
                <TreeRow key={f} $selected={i === 23}>
                  <FolioIcon faded={i === 23} />
                  <span>{f}</span>
                </TreeRow>
              ))}
            </Tree>
            <ScrollBar v dimStart parts={[1, 42, 427]} />
          </TreeBox>
          <BottomTabs>
            <BottomTab>Annulations</BottomTab>
            <BottomTab $active>Panel d'éléments</BottomTab>
          </BottomTabs>
        </Dock>

        <Workspace>
          <ProjectTabs>
            <ProjectTab>
              <ProjectIcon />
              <span>Projet 1001</span>
              <button aria-label="Fermer le projet">
                <svg width="14" height="14" viewBox="0 0 14 14" fill="none">
                  <rect x=".5" y=".5" width="13" height="13" rx="1.500" fill="#e58155" stroke="#d8432a" />
                  <path d="M4 4L10 10M10 4L4 10" stroke="#fff" strokeWidth="2.400" />
                </svg>
              </button>
            </ProjectTab>
          </ProjectTabs>
          <FolioBar>
            <FolioTabs>
              {FOLIO_TABS.map((t, i) => (
                <FolioTab key={i} $w={t.w} $cut={t.cut} $active={t.active}>
                  {!t.cut && <FolioIcon small />}
                  <span>{t.text}</span>
                </FolioTab>
              ))}
            </FolioTabs>
            <TabArrow aria-label="Onglets précédents">
              <svg width="12" height="14" viewBox="1 1 14 14"><path d={TAB_ARROWS.left} fill="#111" /></svg>
            </TabArrow>
            <TabArrow aria-label="Onglets suivants">
              <svg width="12" height="14" viewBox="1 1 14 14"><path d={TAB_ARROWS.right} fill="#111" /></svg>
            </TabArrow>
            <AddFolio aria-label="Ajouter un folio">
              <svg width="18" height="16" viewBox="0 0 18 16" fill="none">
                <path d="M1.500 1.500H16.500V14.500H1.500Z" fill="#fff" stroke="#111" />
                <path d="M1 11.500H17M6.500 11V15M12.500 11V15" stroke="#111" />
                <circle cx="13" cy="4.500" r="4.200" fill="#32ad26" />
                <path d="M13 2V7M10.500 4.500H15.500" stroke="#fff" strokeWidth="1.500" />
              </svg>
            </AddFolio>
            <TornEdge width="4" height="26" viewBox="0 0 4 26">
              <path d="M0 0H1L3 5L1 10L3 16L1 21L2 26H0Z" fill={BG} stroke="#f2f2f2" strokeWidth=".8" />
            </TornEdge>
          </FolioBar>
          <Editor>
            <EditorRow>
              <Canvas><Diagram /></Canvas>
              <ScrollBar v parts={[105, 261, 148]} />
            </EditorRow>
            <BottomScroll><ScrollBar parts={[54, 293, 297]} /></BottomScroll>
          </Editor>
        </Workspace>

        <Dock $w={426}>
          <DockTitle>
            <h2>Propriété de la séléction</h2>
            <DockButton label="Détacher" />
            <DockButton close label="Fermer les propriétés" />
          </DockTitle>
          <PropTabs>
            <PropTab $active>Référence croisée (esclave)</PropTab>
            <PropTab>Général</PropTab>
          </PropTabs>
          <PropPanel>
            <FieldLabel htmlFor="folio">Rechercher dans le folio :</FieldLabel>
            <SelectWrap>
              <select id="folio"><option>16 VARIATEUR ENROULEUR</option></select>
              <svg width="12" height="8" viewBox="0 0 12 8"><path d="M1 1H11L6 7Z" fill="#111" /></svg>
            </SelectWrap>
            <Search aria-label="Rechercher" placeholder="Rechercher" />
            <Results>
              <ResultList>
                {RESULTS.map(([name, pos], i) => (
                  <Result key={name}>
                    <Radio type="radio" name="element" id={`element-${i}`} />
                    <ResultLabel htmlFor={`element-${i}`}>
                      {name}<br />Folio 16 (VARIATEUR ENROULEUR), position {pos}.
                    </ResultLabel>
                    <LookButton aria-label={`Voir ${name}`}><Icon name="zoomFit" /></LookButton>
                  </Result>
                ))}
              </ResultList>
              <ScrollBar dimStart parts={[1, 327, 10]} />
            </Results>
            <Actions>
              <PushButton>Voir cet élément</PushButton>
              <PushButton>Voir l'élément lié</PushButton>
            </Actions>
          </PropPanel>
        </Dock>
      </Body>
    </Desktop>
  );
}
